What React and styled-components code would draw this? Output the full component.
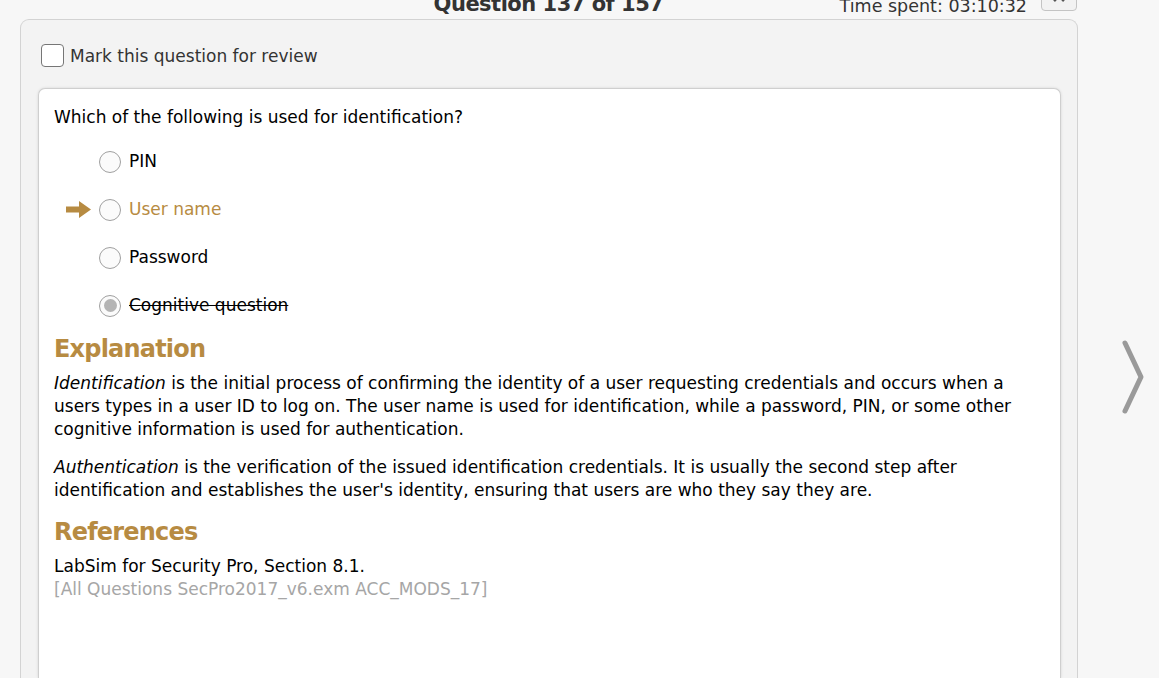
import React from "react";
import styled, { createGlobalStyle } from "styled-components";

const GOLD = "#b78b42";

const Global = createGlobalStyle`
  html, body { margin: 0; padding: 0; }
  body {
    background: #f7f7f7;
    font-family: "DejaVu Sans", Verdana, sans-serif;
    color: #000;
    overflow: hidden;
  }
`;

const Page = styled.div`
  display: flex;
  flex-direction: column;
  height: 678px;
  overflow: hidden;
`;

const TopBar = styled.div`
  display: flex;
  align-items: flex-end;
  height: 40px;
  margin-top: -21px;
  padding: 0 82px 0 20px;
`;

const Title = styled.div`
  flex: 1;
  text-align: center;
  font-weight: bold;
  font-size: 21px;
  letter-spacing: -0.5px;
  color: #333;
  line-height: 30px;
  margin-left: 270px;
`;

const Timer = styled.div`
  width: 270px;
  display: flex;
  align-items: flex-end;
  justify-content: flex-end;
  gap: 14px;
  font-size: 17.5px;
  color: #333;
  line-height: 26px;
  white-space: nowrap;
`;

const MiniButton = styled.div`
  width: 36px;
  height: 30px;
  box-sizing: border-box;
  border: 1px solid #c4c4c4;
  border-radius: 4px;
  background: #f2f2f2;
  margin-bottom: 8px;
  display: flex;
  justify-content: center;
  align-items: flex-end;
  padding-bottom: 8px;
`;

const Main = styled.div`
  display: flex;
  flex: 1;
  padding-left: 20px;
`;

const Panel = styled.div`
  width: 1058px;
  box-sizing: border-box;
  background: #f3f3f3;
  border: 1px solid #d3d3d3;
  border-bottom: none;
  border-radius: 9px 9px 0 0;
  padding: 24px 16px 0 17px;
  display: flex;
  flex-direction: column;
`;

const ReviewRow = styled.label`
  display: flex;
  align-items: center;
  gap: 6px;
  padding-left: 3px;
  font-size: 17px;
  color: #333;
  height: 23px;
`;

const CheckBox = styled.span`
  width: 21px;
  height: 21px;
  border: 1px solid #767676;
  border-radius: 4px;
  background: #fff;
`;

const Card = styled.div`
  margin-top: 21px;
  flex: 1;
  background: #fff;
  border: 1px solid #cfcfcf;
  border-bottom: none;
  border-radius: 7px 7px 0 0;
  box-shadow: 0 0 3px rgba(0, 0, 0, 0.12);
  padding: 17px 15px 0 15px;
  font-size: 17px;
  line-height: 23px;
`;

const Question = styled.div`
  height: 23px;
`;

const Options = styled.div`
  display: flex;
  flex-direction: column;
  margin-top: 21px;
  padding-bottom: 2px;
  gap: 25px;
`;

const Option = styled.div`
  display: flex;
  align-items: center;
  height: 23px;
  padding-left: 12px;
  color: ${(p) => (p.$correct ? GOLD : "#000")};
  text-decoration: ${(p) => (p.$struck ? "line-through" : "none")};
`;

const ArrowSlot = styled.span`
  width: 33px;
  display: flex;
  align-items: center;
`;

const Radio = styled.span`
  width: 22px;
  height: 22px;
  box-sizing: border-box;
  border-radius: 50%;
  border: 1px solid #a0a0a0;
  background: #fbfbfb;
  margin-right: 8px;
  display: flex;
  align-items: center;
  justify-content: center;
  flex-shrink: 0;
  &::after {
    content: "";
    display: ${(p) => (p.$checked ? "block" : "none")};
    width: 13px;
    height: 13px;
    border-radius: 50%;
    background: #b4b4b4;
  }
`;

const Heading = styled.h2`
  margin: 15px 0 8px;
  font-size: 24px;
  line-height: 30px;
  letter-spacing: -0.8px;
  font-weight: bold;
  color: ${GOLD};
`;

const Para = styled.p`
  margin: 0 0 15px;
`;

const Ref = styled.div`
  color: ${(p) => (p.$muted ? "#a6a6a6" : "#000")};
`;

const Side = styled.div`
  flex: 1;
  display: flex;
  justify-content: center;
  padding-top: 320px;
  padding-left: 28px;
`;

const Arrow = () => (
  <svg width="25" height="17" viewBox="0 0 25 17">
    <path d="M0 5.5 H13 V0 L25 8.5 L13 17 V11.5 H0 Z" fill={GOLD} />
  </svg>
);

const Chevron = () => (
  <svg width="24" height="76" viewBox="0 0 24 76">
    <path
      d="M4 4 L20 38 L4 72"
      fill="none"
      stroke="#9a9a9a"
      strokeWidth="5"
      strokeLinecap="round"
      strokeLinejoin="round"
    />
  </svg>
);

const CloseX = () => (
  <svg width="14" height="12" viewBox="0 0 14 12">
    <path d="M2 1 L12 11 M12 1 L2 11" fill="none" stroke="#555" strokeWidth="2.6" />
  </svg>
);

const options = [
  { text: "PIN" },
  { text: "User name", correct: true },
  { text: "Password" },
  { text: "Cognitive question", struck: true, checked: true },
];

export default function App() {
  return (
    <Page>
      <Global />
      <TopBar>
        <Title>Question 137 of 157</Title>
        <Timer>
          <span>Time spent: 03:10:32</span>
          <MiniButton>
            <CloseX />
          </MiniButton>
        </Timer>
      </TopBar>
      <Main>
        <Panel>
          <ReviewRow>
            <CheckBox />
            Mark this question for review
          </ReviewRow>
          <Card>
            <Question>Which of the following is used for identification?</Question>
            <Options>
              {options.map((o) => (
                <Option key={o.text} $correct={o.correct} $struck={o.struck}>
                  <ArrowSlot>{o.correct && <Arrow />}</ArrowSlot>
                  <Radio $checked={o.checked} />
                  <span>{o.text}</span>
                </Option>
              ))}
            </Options>
            <Heading>Explanation</Heading>
            <Para>
              <i>Identification</i> is the initial process of confirming the identity of a user
              requesting credentials and occurs when a users types in a user ID to log on. The user
              name is used for identification, while a password, PIN, or some other cognitive
              information is used for authentication.
            </Para>
            <Para>
              <i>Authentication</i> is the verification of the issued identification credentials.
              It is usually the second step after identification and establishes the user's
              identity, ensuring that users are who they say they are.
            </Para>
            <Heading>References</Heading>
            <Ref>LabSim for Security Pro, Section 8.1.</Ref>
            <Ref $muted>[All Questions SecPro2017_v6.exm ACC_MODS_17]</Ref>
          </Card>
        </Panel>
        <Side>
          <Chevron />
        </Side>
      </Main>
    </Page>
  );
}
